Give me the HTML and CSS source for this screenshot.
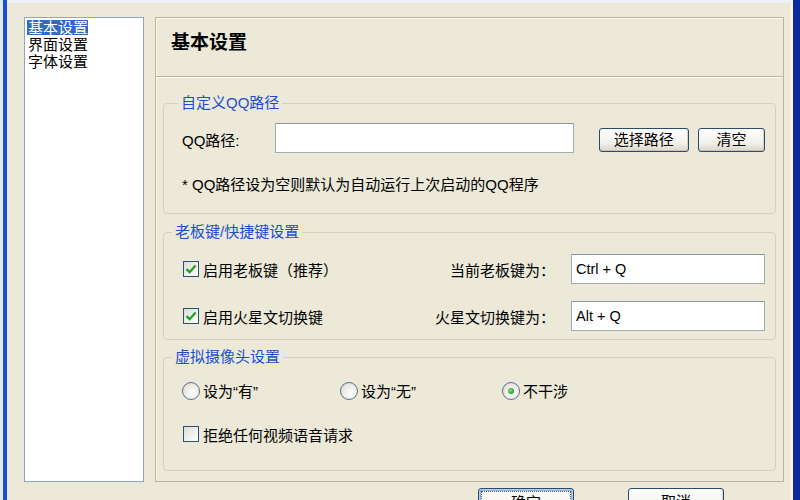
FILE: index.html
```html
<!DOCTYPE html>
<html lang="zh-CN">
<head>
<meta charset="utf-8">
<title>基本设置</title>
<link rel="stylesheet" href="styles.css">
</head>
<body>
<div class="win">
  <div class="strip"></div>
  <div class="main">
    <div class="list">
      <div class="item sel"><span>基本设置</span></div>
      <div class="item"><span>界面设置</span></div>
      <div class="item"><span>字体设置</span></div>
    </div>
    <div class="panel">
      <div class="head">基本设置</div>
      <div class="content">
        <fieldset class="grp grp-path">
          <legend class="lg lg-path">自定义QQ路径</legend>
          <div class="grp-body">
            <div class="path-row">
              <span class="path-label">QQ路径:</span>
              <span class="field path-field"></span>
              <button class="btn btn-browse">选择路径</button>
              <button class="btn btn-clear">清空</button>
            </div>
            <div class="note">* QQ路径设为空则默认为自动运行上次启动的QQ程序</div>
          </div>
        </fieldset>

        <fieldset class="grp grp-keys">
          <legend class="lg">老板键/快捷键设置</legend>
          <div class="grp-body keys-body">
            <div class="key-row">
              <label class="chk"><span class="cb on"><svg viewBox="0 0 16 16" width="16" height="16"><path d="M3.5 8.2 L6.6 11.2 L12.6 4.6" fill="none" stroke="#21a121" stroke-width="2.3"/></svg></span>启用老板键（推荐）</label>
              <span class="key-label">当前老板键为：</span>
              <span class="field key-field">Ctrl + Q</span>
            </div>
            <div class="key-row key-row2">
              <label class="chk"><span class="cb on"><svg viewBox="0 0 16 16" width="16" height="16"><path d="M3.5 8.2 L6.6 11.2 L12.6 4.6" fill="none" stroke="#21a121" stroke-width="2.3"/></svg></span>启用火星文切换键</label>
              <span class="key-label">火星文切换键为：</span>
              <span class="field key-field">Alt + Q</span>
            </div>
          </div>
        </fieldset>

        <fieldset class="grp grp-cam">
          <legend class="lg">虚拟摄像头设置</legend>
          <div class="grp-body">
            <div class="radio-row">
              <label class="rad"><span class="rb"></span>设为“有”</label>
              <label class="rad"><span class="rb"></span>设为“无”</label>
              <label class="rad"><span class="rb on"></span>不干涉</label>
            </div>
            <div class="cam-check">
              <label class="chk"><span class="cb"></span>拒绝任何视频语音请求</label>
            </div>
          </div>
        </fieldset>
      </div>
    </div>
  </div>
  <div class="actions">
    <button class="btn btn-big btn-ok"><span>确定</span></button>
    <button class="btn btn-big btn-cancel"><span>取消</span></button>
  </div>
</div>
</body>
</html>
```

FILE: styles.css
```css
html, body {
  margin: 0;
  padding: 0;
  width: 800px;
  height: 500px;
  overflow: hidden;
  background: #e3e9f6;
}

body {
  font-family: "Liberation Sans", "Noto Sans CJK SC", sans-serif;
  font-size: 15px;
  color: #000;
  text-spacing-trim: space-all;
}

.win {
  margin-left: 3px;
  width: 797px;
  height: 500px;
  box-sizing: border-box;
  border-left: 4px solid #1a4fd8;
  border-right: 7px solid #0b2a9e;
  background: #ece9d8;
  box-shadow: inset -3px 0 0 #f6f4ec;
  display: flex;
  flex-direction: column;
}

.strip {
  flex: none;
  height: 3px;
  background: #eef1f8;
}

.main {
  flex: none;
  display: flex;
  gap: 11px;
  padding: 14px 0 0 17px;
}

.list {
  flex: none;
  width: 120px;
  height: 465px;
  box-sizing: border-box;
  border: 1px solid #8ea4c0;
  background: #fff;
  padding: 1px 0 0 2px;
}

.item {
  height: 17px;
  line-height: 17px;
}

.item span {
  display: inline-block;
  line-height: 15px;
  margin-top: 1px;
  padding: 0 0 0 1px;
}

.item.sel span {
  background: #316ac5;
  color: #fff;
}

.panel {
  flex: none;
  width: 629px;
  height: 465px;
  box-sizing: border-box;
  border: 1px solid #b7b49f;
  box-shadow: inset 1px 1px 0 #fbfaf5;
  display: flex;
  flex-direction: column;
}

.head {
  flex: none;
  height: 59px;
  box-sizing: border-box;
  padding: 14px 0 0 15px;
  line-height: 22px;
  font-size: 19px;
  font-weight: bold;
  border-bottom: 1px solid #b9b6a2;
  box-shadow: 0 1px 0 #fbfaf5;
}

.content {
  padding: 17px 7px 0 7px;
  display: flex;
  flex-direction: column;
}

.grp {
  flex: none;
  margin: 0;
  padding: 0;
  min-width: 0;
  box-sizing: border-box;
  border: 1px solid #d3d0bc;
  border-radius: 4px;
}

.grp-path { height: 120px; }
.grp-keys { height: 117px; margin-top: 9px; }
.grp-cam { height: 123px; margin-top: 8px; }

.lg {
  padding: 0 3px;
  margin-left: 8px;
  line-height: 18px;
  color: #1b4fd0;
}

.lg-path { margin-left: 14px; }

.grp-body {
  padding: 0 10px 0 18px;
}

.path-row {
  margin-top: 11px;
  height: 30px;
  display: flex;
  align-items: center;
}

.path-label {
  width: 94px;
  padding-top: 3px;
}

.field {
  flex: none;
  box-sizing: border-box;
  height: 30px;
  border: 1px solid #a5acb5;
  border-top-color: #8f97a2;
  background: #fff;
  display: flex;
  align-items: center;
  padding-left: 4px;
  font-family: "Liberation Sans", sans-serif;
  font-size: 14.5px;
}

.path-field { width: 299px; }

.btn {
  font-family: "Liberation Sans", "Noto Sans CJK SC", sans-serif;
  font-size: 15px;
  color: #000;
  box-sizing: border-box;
  border: 1px solid #2b4a6e;
  border-radius: 3px;
  background: linear-gradient(#ffffff 0%, #f3f2ec 60%, #d9d6cb 100%);
  box-shadow: inset 0 -1px 0 #c9c4b4, inset -1px 0 0 #d6d2c4;
  padding: 0;
  line-height: 20px;
}

.btn-browse {
  width: 91px;
  height: 24px;
  margin-left: 25px;
  margin-top: 4px;
}

.btn-clear {
  width: 68px;
  height: 24px;
  margin-left: 9px;
  margin-top: 4px;
}

.note {
  margin-top: 23px;
  line-height: 18px;
}

.keys-body {
  padding-left: 19px;
}

.key-row {
  margin-top: 13px;
  height: 30px;
  display: flex;
  align-items: center;
}

.key-row2 { margin-top: 17px; }

.chk {
  display: flex;
  align-items: center;
  gap: 4px;
  flex: 1;
}

.cb {
  width: 16px;
  height: 16px;
  box-sizing: border-box;
  border: 1px solid #2a4f78;
  background: linear-gradient(135deg, #dcdcd4 0%, #f6f6f2 70%, #ffffff 100%);
  display: inline-flex;
  flex: none;
}

.cb svg {
  margin: -1px;
}

.key-label {
  text-align: right;
  margin-right: 16px;
}

.key-field {
  width: 194px;
}

.radio-row {
  margin-top: 14px;
  height: 20px;
  display: grid;
  grid-template-columns: 158px 162px auto;
  align-items: center;
}

.rad {
  display: flex;
  align-items: center;
  gap: 3px;
}

.rb {
  width: 18px;
  height: 18px;
  box-sizing: border-box;
  border-radius: 50%;
  border: 1px solid #5b6f87;
  background: radial-gradient(circle at 65% 65%, #ffffff 0%, #ecebe4 55%, #d2d1c8 100%);
  display: inline-flex;
  align-items: center;
  justify-content: center;
  flex: none;
}

.rb.on::after {
  content: "";
  width: 6px;
  height: 6px;
  border-radius: 50%;
  background: radial-gradient(circle at 40% 40%, #7fe07f 0%, #21a121 70%);
}

.cam-check {
  margin-top: 24px;
  height: 20px;
  display: flex;
  align-items: center;
  padding-left: 1px;
}

.actions {
  flex: none;
  display: flex;
  margin-top: 6px;
  padding-left: 471px;
  gap: 54px;
}

.btn-big {
  flex: none;
  width: 96px;
  height: 28px;
  line-height: 24px;
}

.btn-ok {
  box-shadow: inset 0 0 0 1px #b6cdf0, inset 0 0 0 2px #8fb1e8;
}

.btn-ok span {
  display: block;
  margin: 2px;
  outline: 1px dotted #555;
  outline-offset: -1px;
}
```
